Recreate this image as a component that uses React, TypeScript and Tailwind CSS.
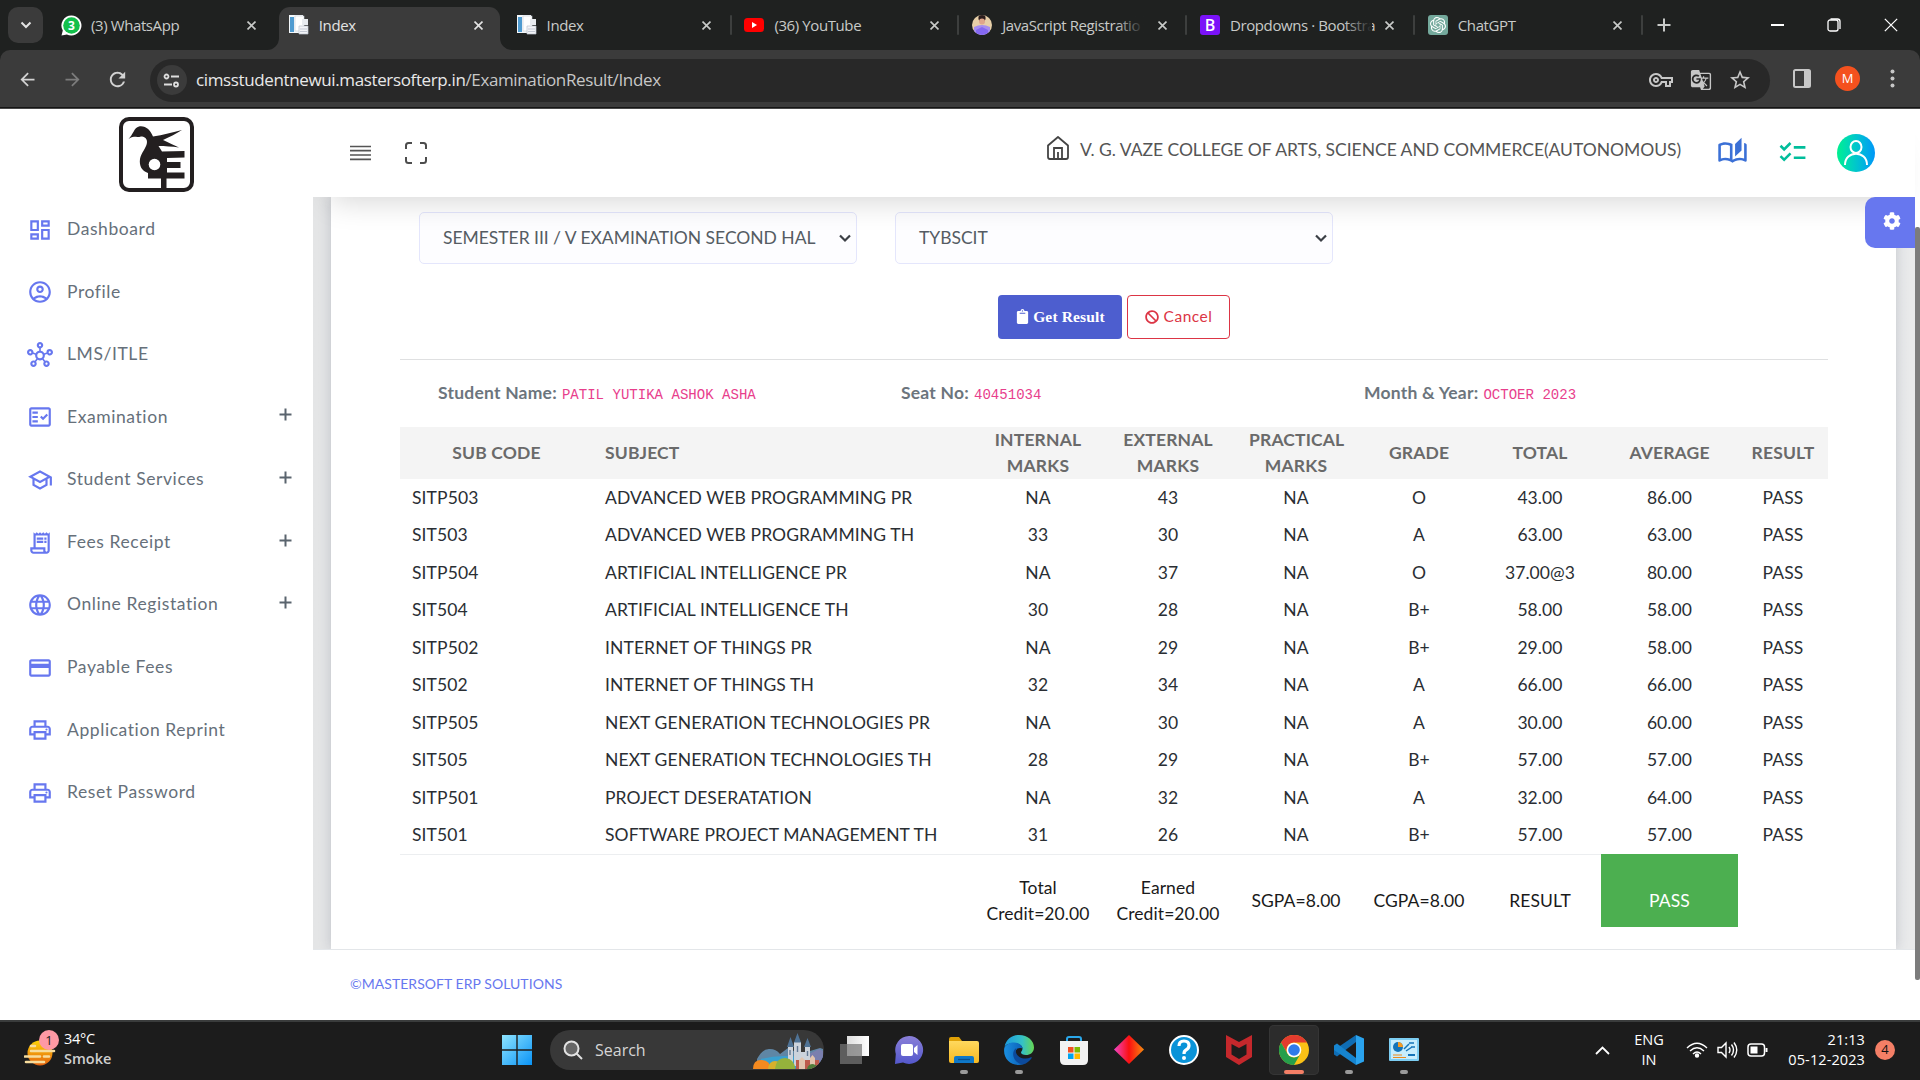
import React from "react";
import {
  MdOutlineDashboard, MdOutlineAccountCircle, MdOutlineHub, MdOutlineFactCheck, MdOutlineSchool,
  MdOutlineReceiptLong, MdLanguage, MdOutlineCreditCard, MdOutlinePrint, MdChecklist, MdOutlineAutoStories,
  MdOutlineVpnKey, MdStarBorder, MdGTranslate, MdRefresh, MdArrowBack, MdArrowForward,
} from "react-icons/md";
import { FaClipboard, FaBan, FaCog } from "react-icons/fa";
import { SiOpenai } from "react-icons/si";

const Cross = ({ s = 9, w = 1.8 }: { s?: number; w?: number }) => (
  <svg width={s} height={s} viewBox="0 0 10 10" stroke="currentColor" strokeWidth={w} fill="none"><path d="M.6.6l8.8 8.8M9.4.6L.6 9.4" /></svg>
);

const DocIcon = () => (
  <svg width="20" height="20" viewBox="0 0 20 20">
    <rect x="0" y="0" width="14" height="18" fill="#f4f8fb" />
    <rect x="1" y="2" width="4" height="15" fill="#4f9bd0" />
    <rect x="6" y="1" width="9" height="15" fill="#fff" stroke="#c5cbd3" strokeWidth=".6" />
    <path d="M13 4h6v6h-6z" fill="#e8ebef" />
    <path d="M10 11h9v8h-9z" fill="#f3f4f7" stroke="#bcc3cf" strokeWidth=".7" />
    <path d="M11 14h7M11 16.500h7" stroke="#c4c9d4" />
  </svg>
);
const WaIcon = () => (
  <svg width="21" height="21" viewBox="0 0 21 21">
    <path d="M10.500.5a10 10 0 1 1-4.600 18.900L.5 20.500l1.300-5A10 10 0 0 1 10.500.5z" fill="#fff" />
    <circle cx="10.500" cy="10.500" r="8.300" fill="#12c04b" />
    <text x="10.500" y="14.800" textAnchor="middle" fontSize="12" fontWeight="700" fill="#fff" fontFamily="Open Sans">3</text>
  </svg>
);
const YtIcon = () => (
  <svg width="20" height="20" viewBox="0 0 20 20"><rect y="3" width="20" height="14" rx="3.500" fill="#f00" /><path d="M8 7l5 3-5 3z" fill="#fff" /></svg>
);
const PersonIcon = () => (
  <svg width="20" height="20" viewBox="0 0 20 20">
    <defs><clipPath id="pc"><circle cx="10" cy="10" r="10" /></clipPath></defs>
    <g clipPath="url(#pc)">
      <rect width="20" height="20" fill="#e7cfa8" />
      <circle cx="10" cy="3" r="3.600" fill="#2a1c1c" /><circle cx="10" cy="6.500" r="3" fill="#dfa58b" />
      <path d="M2 12Q10 8 18 12V20H2z" fill="#a58df0" /><path d="M4 15l6-3 6 3v5H4z" fill="#8468f2" />
    </g>
  </svg>
);
const BIcon = () => (
  <div className="flex h-5 w-5 items-center justify-center rounded-[3px] bg-[#7a12f8] text-[16px] leading-none font-semibold text-white">B</div>
);
const GptIcon = () => (
  <div className="flex h-5 w-5 items-center justify-center rounded-[3px] bg-[#74a99c] text-white"><SiOpenai size={16} /></div>
);

const tabs = [
  { t: "(3) WhatsApp", i: <WaIcon /> },
  { t: "Index", i: <DocIcon />, active: true },
  { t: "Index", i: <DocIcon />, sep: true },
  { t: "(36) YouTube", i: <YtIcon />, sep: true },
  { t: "JavaScript Registratio", i: <PersonIcon />, sep: true, fade: true },
  { t: "Dropdowns · Bootstra", i: <BIcon />, sep: true, fade: true },
  { t: "ChatGPT", i: <GptIcon />, sep: true },
];

const TabStrip = () => (
  <div className="flex h-[50px] items-start bg-[#1f2120] pl-2 font-['Open_Sans',sans-serif] text-[#c8cac8]">
    <div className="mt-[7px] mr-[8px] flex h-9 w-[35px] items-center justify-center rounded-[10px] bg-[#3b3b3b] text-[#e3e3e3]">
      <svg width="12" height="8" viewBox="0 0 12 8" fill="none" stroke="currentColor" strokeWidth="2"><path d="M1.500 1.500L6 6l4.500-4.500" /></svg>
    </div>
    {tabs.map((t, k) => (
      <div key={k} className={`relative flex h-[50px] w-[227.8px] shrink-0 ${t.active ? "text-[#e3e3e3]" : ""}`}>
        <div className={`mt-[7px] flex h-[43px] w-[221px] items-center pb-[7px] pl-[10px] ${t.active ? "rounded-t-[11px] bg-[#3b3b3b]" : ""}`}>
          <span className="flex w-[30px] shrink-0 items-center">{t.i}</span>
          <span className="relative w-[142px] text-[15px] leading-5 tracking-[-0.4px] whitespace-nowrap">
            {t.t}
            {t.fade && <span className="absolute inset-y-0 right-0 w-7 bg-gradient-to-r from-transparent to-[#1f2120]" />}
          </span>
          <span className="ml-[12px] flex w-3 justify-center"><Cross /></span>
        </div>
        {t.sep && <div className="mt-[15px] ml-[2px] h-5 w-[2px] rounded bg-[#3d3f3e]" />}
        {t.active && (
          <>
            <svg className="absolute bottom-0 -left-3" width="12" height="12"><path d="M12 0v12H0A12 12 0 0 0 12 0" fill="#3b3b3b" /></svg>
            <svg className="absolute bottom-0 left-[221px]" width="12" height="12"><path d="M0 0v12h12A12 12 0 0 1 0 0" fill="#3b3b3b" /></svg>
          </>
        )}
      </div>
    ))}
    <div className="ml-[11px] flex h-[50px] items-center">
      <svg width="14" height="14" viewBox="0 0 14 14" stroke="#c8cac8" strokeWidth="2"><path d="M7 .5v13M.5 7h13" /></svg>
    </div>
    <div className="ml-auto flex h-[50px] items-center pr-[22px] text-white">
      <div className="h-[1.5px] w-[13px] bg-white" />
      <svg className="ml-[43px]" width="14" height="14" viewBox="0 0 14 14" fill="none" stroke="#fff" strokeWidth="1.300"><rect x="1" y="2" width="10" height="11" rx="2" /><path d="M3.500 1H10.500a2.600 2.600 0 0 1 2.500 2.600V11" /></svg>
      <span className="ml-[43px]"><Cross s={14} w={0.9} /></span>
    </div>
  </div>
);

const Toolbar = () => (
  <div className="flex h-[59px] bg-[#1f2120]">
    <div className="flex h-[57px] w-full items-center rounded-t-[10px] bg-[#3b3b3b] font-['Open_Sans',sans-serif] shadow-[0_1px_0_#151515,0_2px_0_#474747]">
      <div className="flex w-[150px] items-center pt-px">
        <MdArrowBack size={21} className="ml-[17px] text-[#d2d2d2]" />
        <MdArrowForward size={21} className="ml-[24px] text-[#7c7c7c]" />
        <MdRefresh size={23} className="ml-[23px] text-[#d2d2d2]" />
      </div>
      <div className="mt-[3px] flex h-[43px] w-[1620px] items-center rounded-full bg-[#282828] text-[#c7c7c7]">
        <div className="ml-[7px] flex h-[30px] w-[30px] items-center justify-center rounded-full bg-[#3b3b3b]">
          <svg className="mr-px" width="17" height="15" viewBox="0 0 17 15" fill="none" stroke="#dedede" strokeWidth="1.800"><circle cx="3.500" cy="3.500" r="2" /><path d="M8 3.500h8M1 11.500h8" /><circle cx="13" cy="11.500" r="2" /></svg>
        </div>
        <div className="ml-[9px] text-[17px] tracking-[-0.37px] whitespace-nowrap"><span className="text-[#e8e8e8]">cimsstudentnewui.mastersofterp.in</span>/ExaminationResult/Index</div>
        <div className="ml-auto flex items-center pr-[18px]">
          <MdOutlineVpnKey size={24} /><MdGTranslate size={22} className="ml-[17px]" /><MdStarBorder size={24} className="ml-[16px]" />
        </div>
      </div>
      <svg className="ml-[23px]" width="18" height="19" viewBox="0 0 18 19"><rect x="1" y="1" width="16" height="17" rx="1.500" fill="none" stroke="#c7c7c7" strokeWidth="2" /><rect x="11" y="1" width="6" height="17" fill="#c7c7c7" /></svg>
      <div className="ml-[24px] flex h-[25px] w-[25px] items-center justify-center rounded-full bg-[#f4511e] text-[13px] text-white">M</div>
      <svg className="ml-[30px]" width="5" height="19" viewBox="0 0 5 19" fill="#c7c7c7"><circle cx="2.500" cy="2.500" r="2" /><circle cx="2.500" cy="9.500" r="2" /><circle cx="2.500" cy="16.500" r="2" /></svg>
    </div>
  </div>
);

const nav = [
  { t: "Dashboard", I: MdOutlineDashboard },
  { t: "Profile", I: MdOutlineAccountCircle },
  { t: "LMS/ITLE", I: MdOutlineHub },
  { t: "Examination", I: MdOutlineFactCheck, p: true },
  { t: "Student Services", I: MdOutlineSchool, p: true },
  { t: "Fees Receipt", I: MdOutlineReceiptLong, p: true },
  { t: "Online Registation", I: MdLanguage, p: true },
  { t: "Payable Fees", I: MdOutlineCreditCard },
  { t: "Application Reprint", I: MdOutlinePrint },
  { t: "Reset Password", I: MdOutlinePrint },
];

const CollegeLogo = () => (
  <svg width="75" height="75" viewBox="0 0 75 75">
    <rect x="2" y="2" width="71" height="71" rx="8" fill="#fff" stroke="#231f20" strokeWidth="4" />
    <path d="M9.500 22C14 18 15 10.500 20 9.500C27 8.500 31 13 34 19.500C44 18 54 15 63 13C57 17 50 20 44 23C50 26 55 28 60 30.500C53 29.500 46 29 39.500 29L43 34.500L65.500 34V40.500L48 41V45H61.500V51H48V55.500H65.500V61.500H47.500V72H42V61.500H29V56C23 54 20 49 21 42C22 36 28 30 28 25C28 21 25 19.500 22 19.500C19 20.500 17 19.800 15 19.800C13 20 11 21 9.500 22Z" fill="#231f20" />
    <circle cx="35.500" cy="47.500" r="5.800" fill="#fff" />
  </svg>
);

const Sidebar = () => (
  <aside className="relative z-20 flex w-[313px] shrink-0 flex-col bg-white">
    <div className="mt-[8px] ml-[119px] h-[80px]"><CollegeLogo /></div>
    <nav className="mt-px flex flex-col">
      {nav.map(({ t, I, p }) => (
        <div key={t} className="flex h-[62.55px] items-center pl-[27px]">
          <I className="mt-[1px] shrink-0 text-[#6777ef]" size={26} />
          <span className="ml-[14px] text-[17.5px] tracking-[0.58px] text-[#66707a]">{t}</span>
          {p && <svg className="mt-[-4px] mr-[21px] ml-auto" width="13" height="13" viewBox="0 0 13 13" stroke="#5a646e" strokeWidth="2"><path d="M6.500.5v12M.5 6.500h12" /></svg>}
        </div>
      ))}
    </nav>
  </aside>
);

const Header = () => (
  <header className="relative z-10 flex h-[88px] shrink-0 bg-white shadow-[0_22px_30px_-18px_rgba(0,0,0,0.17)]">
    <svg className="mt-[36px] ml-[37px]" width="21" height="16" viewBox="0 0 21 16" stroke="#555" strokeWidth="1.700"><path d="M0 1.500h21M0 5.700h21M0 10h21M0 14.300h21" /></svg>
    <svg className="mt-[33px] ml-[34px]" width="22" height="22" viewBox="0 0 22 22" fill="none" stroke="#4d4d4d" strokeWidth="2"><path d="M1 7V3.500Q1 1 3.500 1H7M15 1h3.500Q21 1 21 3.500V7M21 15v3.500Q21 21 18.500 21H15M7 21H3.500Q1 21 1 18.500V15" /></svg>
    <svg className="mt-[27px] ml-[620px]" width="22" height="24" viewBox="0 0 22 24" fill="none" stroke="#444" strokeWidth="1.800"><path d="M1 9.500L11 1l10 8.500V21q0 2-2 2H3q-2 0-2-2z" strokeLinejoin="round" /><path d="M7 23V12h8v11M11 16v7" /></svg>
    <div className="mt-[28px] ml-[11px] w-[608px] text-[17.5px] leading-[26px] tracking-[-0.03px] whitespace-nowrap text-[#555]">V. G. VAZE COLLEGE OF ARTS, SCIENCE AND COMMERCE(AUTONOMOUS)</div>
    <MdOutlineAutoStories className="mt-[28px] ml-[29px] text-[#3b70d6]" size={31} />
    <MdChecklist className="mt-[28px] ml-[29px] text-[#00bd9b]" size={31} />
    <div className="mt-[25px] ml-[29px] flex h-[38px] w-[38px] items-center justify-center rounded-full bg-gradient-to-r from-[#00f08e] to-[#0096f8]">
      <svg width="26" height="26" viewBox="0 0 26 26" fill="none" stroke="#fff" strokeWidth="2"><ellipse cx="13" cy="7" rx="5.500" ry="6" /><path d="M2 25C2 10 24 10 24 25" /></svg>
    </div>
  </header>
);

const Select = ({ t }: { t: string }) => (
  <div className="flex h-[52px] w-[438px] items-center rounded-[5px] border border-[#e4e6fc] bg-[#fdfdff] pl-[23px] text-[17.5px] text-[#555c63]">
    <span className="w-[374px] tracking-[-0.03px] whitespace-nowrap">{t}</span>
    <svg className="ml-[22px]" width="12" height="9" viewBox="0 0 12 9" fill="none" stroke="#3c4046" strokeWidth="2.200"><path d="M1 1.500l5 5 5-5" /></svg>
  </div>
);

const rows = [
  ["SITP503", "ADVANCED WEB PROGRAMMING PR", "NA", "43", "NA", "O", "43.00", "86.00", "PASS"],
  ["SIT503", "ADVANCED WEB PROGRAMMING TH", "33", "30", "NA", "A", "63.00", "63.00", "PASS"],
  ["SITP504", "ARTIFICIAL INTELLIGENCE PR", "NA", "37", "NA", "O", "37.00@3", "80.00", "PASS"],
  ["SIT504", "ARTIFICIAL INTELLIGENCE TH", "30", "28", "NA", "B+", "58.00", "58.00", "PASS"],
  ["SITP502", "INTERNET OF THINGS PR", "NA", "29", "NA", "B+", "29.00", "58.00", "PASS"],
  ["SIT502", "INTERNET OF THINGS TH", "32", "34", "NA", "A", "66.00", "66.00", "PASS"],
  ["SITP505", "NEXT GENERATION TECHNOLOGIES PR", "NA", "30", "NA", "A", "30.00", "60.00", "PASS"],
  ["SIT505", "NEXT GENERATION TECHNOLOGIES TH", "28", "29", "NA", "B+", "57.00", "57.00", "PASS"],
  ["SITP501", "PROJECT DESERATATION", "NA", "32", "NA", "A", "32.00", "64.00", "PASS"],
  ["SIT501", "SOFTWARE PROJECT MANAGEMENT TH", "31", "26", "NA", "B+", "57.00", "57.00", "PASS"],
];
const heads = ["SUB CODE", "SUBJECT", "INTERNAL MARKS", "EXTERNAL MARKS", "PRACTICAL MARKS", "GRADE", "TOTAL", "AVERAGE", "RESULT"];
const cols = "grid grid-cols-[193px_380px_130px_130px_126px_120px_122px_137px_90px]";

const Info = ({ l, v, c }: { l: string; v: string; c: string }) => (
  <div className={`flex items-baseline ${c}`}>
    <span className="text-[17.5px] font-bold tracking-[0.22px] text-[#6c757d]">{l}</span>
    <span className="ml-[5px] font-['Liberation_Mono',monospace] text-[14.05px] text-[#e83e8c]">{v}</span>
  </div>
);

const Results = () => (
  <div className="w-[1428px] text-[17.5px]">
    <div className={`${cols} h-[52px] items-center bg-[#f4f4f4] text-center text-[17.5px] leading-[26px] font-bold tracking-[0.15px] text-[#6a6a6a]`}>
      {heads.map((h, k) => <div key={h} className={k === 1 ? "pl-3 text-left" : k > 1 && k < 5 ? "px-4" : ""}>{h}</div>)}
    </div>
    {rows.map((r) => (
      <div key={r[0]} className={`${cols} h-[37.5px] items-center text-center tracking-[0.1px] text-[#2a2e33]`}>
        {r.map((c, k) => <div key={k} className={k < 2 ? "pl-3 text-left" : ""}>{c}</div>)}
      </div>
    ))}
    <div className={`${cols} h-[73px] text-center leading-[26px] text-[#1a1a1a]`}>
      {["", "", "Total Credit=20.00", "Earned Credit=20.00", "SGPA=8.00", "CGPA=8.00", "RESULT", "PASS"].map((c, k) => (
        <div key={k} className={`flex items-center justify-center border-t pt-5 ${k === 7 ? "border-[#4caf50] bg-[#4caf50] text-white" : "border-[#eceef0]"}`}><span className="w-[118px] tracking-[0.08px]">{c}</span></div>
      ))}
    </div>
  </div>
);

const Main = () => (
  <div className="flex w-[1602px] flex-col">
    <Header />
    <div className="relative flex h-[752px] bg-gradient-to-r from-[#e4e5e6] to-[#e9eaeb]">
      <div className="ml-[18px] h-[752px] w-[1565px] bg-white pl-[69px] shadow-[0_0_12px_rgba(40,50,80,0.2)]">
        <div className="flex gap-[38px] pt-[15px] pl-[19px]">
          <Select t="SEMESTER III / V EXAMINATION SECOND HAL" />
          <Select t="TYBSCIT" />
        </div>
        <div className="mt-[31px] flex gap-[5px] pl-[598px]">
          <div className="flex h-[44px] w-[124px] items-center justify-center gap-[3px] rounded-[4px] bg-[#4d5ecf] pb-px font-['Liberation_Serif',serif] text-[15.5px] font-bold tracking-[0.15px] text-white"><FaClipboard size={15} />Get Result</div>
          <div className="flex h-[44px] w-[103px] items-center justify-center gap-[5px] rounded-[4px] border border-[#dc3545] pb-px text-[15.5px] tracking-[0.5px] text-[#dc3545]"><FaBan size={14} />Cancel</div>
        </div>
        <div className="mt-[20px] h-px w-[1428px] bg-[#dfe0e1]" />
        <div className="mt-[20px] flex h-[26px] pl-[38px]">
          <Info l="Student Name:" v="PATIL YUTIKA ASHOK ASHA" c="w-[463px]" />
          <Info l="Seat No:" v="40451034" c="w-[463px]" />
          <Info l="Month & Year:" v="OCTOER 2023" c="" />
        </div>
        <div className="mt-[21px]"><Results /></div>
      </div>
      <div className="absolute top-0 right-0 z-20 flex h-[51px] w-[50px] items-center justify-center rounded-l-[10px] bg-[#6777ef] pb-1 pl-1 text-white"><FaCog size={18} /></div>
    </div>
    <footer className="relative z-10 flex h-[71px] items-center border-t border-[#e3e6e9] bg-white pb-[3px] pl-[37px] text-[14px] tracking-[0.05px] text-[#6777ef]">©MASTERSOFT ERP SOLUTIONS</footer>
  </div>
);

const Castle = () => (
  <svg className="-mb-px" width="70" height="36" viewBox="0 0 70 36">
    <path d="M4 26Q10 15 17 16q6 0 10 5l8-6 12 6 20-6 3 1v20H4z" fill="#5f86a5" />
    <path d="M8 26q22-6 50 0v9H8z" fill="#3aa0d0" />
    <path d="M54 22l12-6 4 2v14H54z" fill="#7a7fae" />
    <g fill="#ccd3dc"><path d="M35 13h5v20h-5zM41 9h7v24h-7zM52 14h5v16h-5zM48 19h4v14h-4z" /></g>
    <g fill="#4f7396"><path d="M34 14l3.500-10L41 14zM41 9.500L44.500 0 48 9.500zM51 14l3.500-9L58 14z" /></g>
    <path d="M37 17v5M44.500 13v6M54.500 18v5" stroke="#647a94" strokeWidth="1.400" />
    <path d="M43 27h23v6q-4 3-10 3H43z" fill="#bd5a4b" />
    <path d="M46 36V27l3-3 3 3v9zM57 33v-8l2.500-3 2.500 3v8z" fill="#e2c4ae" />
    <path d="M0 36q0-9 8-9 9 0 10 9z" fill="#f58a1f" />
    <path d="M15 36q1-8 7-8t8 8z" fill="#d8b02c" />
    <path d="M22 36q1-11 10-11 10 1 10 11z" fill="#95b23c" />
    <path d="M54 36q1-5 6-5 4 1 5 3l-5 2z" fill="#4f7c3a" />
  </svg>
);

const apps: { n: string; d?: boolean; on?: boolean; e: React.ReactNode }[] = [
  { n: "tasks", e: <><path d="M8 1h22v20H8z" fill="url(#tw)" /><path d="M1 9h22v20H1z" fill="#777" fillOpacity=".72" /></> },
  { n: "chat", e: <><path d="M15 1a14 14 0 1 1-6 26.600L1 29l.8-10A14 14 0 0 1 15 1z" fill="url(#ch)" /><rect x="7" y="9" width="12" height="12" rx="2" fill="#fff" /><path d="M20 13l3.500-3v10L20 17z" fill="#fff" /></> },
  { n: "files", d: true, e: <><path d="M0 4q0-2 2-2h8l3 4H0z" fill="#e0a106" /><path d="M0 6h28q2 0 2 2v18q0 2-2 2H2q-2 0-2-2z" fill="url(#fo)" /><path d="M5 28v-5q0-2 2-2h16q2 0 2 2v5z" fill="#0f78c8" /><path d="M9 24.500h12" stroke="#0a4f8e" strokeWidth="1.300" /></> },
  { n: "edge", d: true, e: <><path d="M.5 12C2 4 8 0 15 0c9 0 15 6 15 12.500 0 5-4 7.500-8 7.500-3 0-5-1.300-5-2.500 0-1 1.500-1.500 1.500-4C18.500 10 14 8 10 8 5 8 1.500 10 .5 12z" fill="url(#ed)" /><path d="M.3 13C1.500 9.500 6 7.500 10 7.500c5 0 8.500 3 8.500 6-7-2-9 4-5.500 9.500 2 3.500 6 6.500 6 6.500C8 32-1.500 24 .3 13z" fill="url(#eb)" /><path d="M12.500 13c-4 2-4.500 8-1 12.500 3 3.500 7 4 7.500 4 4-1 7-4 8.700-6.500.3-.7-.2-1-.8-.7-6 3-14 .2-15-5.300-.2-1.500 0-3 .6-4z" fill="#0c4a9b" /></> },
  { n: "store", e: <><path d="M8 7V4q0-2 2-2h10q2 0 2 2v3" fill="none" stroke="#2aa7ea" strokeWidth="2" /><path d="M1 6h28v19q0 5-5 5H6q-5 0-5-5z" fill="#f2f2f2" /><path d="M9 12h5.500v5.500H9z" fill="#f25022" /><path d="M15.500 12H21v5.500h-5.500z" fill="#7fba00" /><path d="M9 18.500h5.500V24H9z" fill="#00a4ef" /><path d="M15.500 18.500H21V24h-5.500z" fill="#ffb900" /></> },
  { n: "diamond", e: <path d="M15 0l15 14.500L15 29 0 14.500z" fill="url(#di)" /> },
  { n: "help", e: <><circle cx="15" cy="15" r="14" fill="#0a93d8" stroke="#fff" strokeWidth="2" /><path d="M10 11q0-5 5-5t5 4.500q0 3-3 4.500-2 1-2 4" fill="none" stroke="#fff" strokeWidth="3.200" /><circle cx="15" cy="23" r="2" fill="#fff" /></> },
  { n: "shield", e: <path d="M2 0l13 7L28 0v22l-13 8L2 22zM7.500 9v10.500L15 24l7.500-4.500V9L15 13z" fill="#c5282c" fillRule="evenodd" /> },
  { n: "chrome", on: true, e: <><circle cx="15" cy="15" r="15" fill="#fbc116" /><path d="M2 7.500A15 15 0 0 1 28 7.500H15a7.500 7.500 0 0 0-6.500 11.250z" fill="#e33b2e" /><path d="M2 7.500A15 15 0 0 0 15 30l6.500-11.250A7.500 7.500 0 0 1 8.500 18.750z" fill="#269f4b" /><circle cx="15" cy="15" r="7.300" fill="#fff" /><circle cx="15" cy="15" r="5.800" fill="#2f7bea" /></> },
  { n: "code", d: true, e: <><path d="M22 0v7L3 21.500l-3-2V15z" fill="#0f6db4" /><path d="M22 30v-7L3 8.500l-3 2V15z" fill="#1684cf" /><path d="M22 0l8 3.500v23L22 30z" fill="#2aa3ee" /></> },
  { n: "panel", d: true, e: <><rect x="0" y="3" width="30" height="23" rx="1" fill="#7ccdf2" /><rect x="2" y="5" width="26" height="19" fill="#c7edfc" /><circle cx="9" cy="12" r="5" fill="#1474b8" /><path d="M9 12V7a5 5 0 0 1 5 5z" fill="#f59a23" /><path d="M15 14l5-5M17 16l6-4M20 8h5M22 12h4" stroke="#1474b8" strokeWidth="1.500" /><path d="M4 20h9M4 22.500h13" stroke="#ec8a1c" /><path d="M19 20h7" stroke="#1474b8" strokeWidth="2" /></> },
];

const Taskbar = () => (
  <div className="flex h-[60px] items-center border-t-2 border-[#3a3c3c] bg-[#1c1c1c] pb-[2px] font-['Open_Sans',sans-serif] text-[15px] text-white">
    <svg width="0" height="0" className="absolute">
      <defs>
        <linearGradient id="tw"><stop stopColor="#ddd" /><stop offset="1" stopColor="#fff" /></linearGradient>
        <linearGradient id="ch" x2="0" y2="1"><stop stopColor="#8a7fd8" /><stop offset="1" stopColor="#5458cc" /></linearGradient>
        <linearGradient id="fo" x2="0" y2="1"><stop stopColor="#ffd95e" /><stop offset="1" stopColor="#f7b922" /></linearGradient>
        <linearGradient id="ed"><stop stopColor="#1c9be0" /><stop offset=".6" stopColor="#35c1c7" /><stop offset="1" stopColor="#66d752" /></linearGradient>
        <linearGradient id="eb"><stop stopColor="#1a8fe0" /><stop offset="1" stopColor="#0b5fb8" /></linearGradient>
        <linearGradient id="di"><stop stopColor="#f046c8" /><stop offset=".5" stopColor="#fb1010" /><stop offset="1" stopColor="#f58a10" /></linearGradient>
        <linearGradient id="wn" x2="1" y2="1"><stop stopColor="#8ee4ff" /><stop offset="1" stopColor="#0a93f5" /></linearGradient>
        <linearGradient id="su" x2="0" y2="1"><stop stopColor="#fdd308" /><stop offset="1" stopColor="#e3600e" /></linearGradient>
      </defs>
    </svg>
    <svg className="ml-[24px]" width="36" height="44" viewBox="0 0 36 44">
      <circle cx="16" cy="25" r="12.500" fill="url(#su)" /><path d="M7 18h4M7 23h23M1 28.500h15M20 28.500h5M2 34h18" stroke="#f7dc9c" strokeWidth="2.600" strokeLinecap="round" />
      <circle cx="25" cy="12" r="10" fill="#ff99a4" /><text x="25" y="17" textAnchor="middle" fontSize="13" fill="#222" fontFamily="Open Sans">1</text>
    </svg>
    <div className="mt-[-2px] ml-[4px] w-[438px] leading-5"><div className="text-[14.5px] tracking-[-0.3px]">34°C</div><div className="text-[14.5px] font-semibold tracking-[0px] text-[#cfcfcf]">Smoke</div></div>
    <svg width="30" height="30" viewBox="0 0 30 30" fill="url(#wn)"><path d="M0 0h14.300v14.300H0zM15.700 0H30v14.300H15.700zM0 15.700h14.300V30H0zM15.700 15.700H30V30H15.700z" /></svg>
    <div className="ml-[18px] flex h-[40px] w-[274px] items-center overflow-hidden rounded-full bg-[#383838]">
      <svg className="ml-[13px]" width="20" height="20" viewBox="0 0 20 20" fill="#666" stroke="#e2e2e2" strokeWidth="2"><circle cx="8.500" cy="8.500" r="7" /><path d="M13.500 13.500L19 19" /></svg>
      <span className="ml-[12px] w-[158px] text-[16px] text-[#d5d5d5]">Search</span>
      <Castle />
    </div>
    <div className="ml-[2px] flex">
      {apps.map((a) => (
        <div key={a.n} className={`mx-[2.5px] flex h-[50px] w-[50px] flex-col items-center rounded-[5px] pt-[10px] ${a.on ? "bg-[#2c2c2c] ring-1 ring-[#353535] ring-inset" : ""}`}>
          <svg width="30" height="30" viewBox="0 0 30 30">{a.e}</svg>
          {a.d && <div className="mt-[5px] h-1 w-2 rounded-full bg-[#9a9a9a]" />}
          {a.on && <div className="mt-[5px] h-1 w-5 rounded-full bg-[#f47f66]" />}
        </div>
      ))}
    </div>
    <div className="ml-auto flex items-center pr-[25px]">
      <svg width="15" height="9" viewBox="0 0 15 9" fill="none" stroke="#fff" strokeWidth="1.800"><path d="M1 8l6.500-6.500L14 8" /></svg>
      <div className="ml-[22px] w-[34px] text-center text-[14.5px] leading-5">ENG<br />IN</div>
      <svg className="ml-[20px]" width="22" height="16" viewBox="0 0 22 16" fill="none" stroke="#fff" strokeWidth="1.400"><path d="M1 6Q11-3.500 21 6M4 9q7-6.500 14 0M7 12q4-4 8 0" /><circle cx="11" cy="13.500" r="1.500" fill="#fff" /></svg>
      <svg className="ml-[9px]" width="21" height="18" viewBox="0 0 21 18" fill="none" stroke="#fff" strokeWidth="1.400"><path d="M1 6.500h3.500L9 2v14l-4.500-4.500H1zM12 6q2 3 0 6M14.500 3.500q4 5.500 0 11M17 1.500q5.500 7.500 0 15" /></svg>
      <svg className="ml-[9px]" width="21" height="14" viewBox="0 0 21 14" fill="none" stroke="#fff" strokeWidth="1.500"><rect x="1" y="1" width="16.500" height="12" rx="3" /><rect x="3.500" y="3.500" width="7" height="7" fill="#fff" stroke="none" /><path d="M19.500 5v4" strokeWidth="2" /></svg>
      <div className="ml-[11px] w-[86px] text-right text-[14.5px] leading-5 tracking-[0.1px] whitespace-nowrap">21:13<br />05-12-2023</div>
      <div className="ml-[10px] flex h-5 w-5 items-center justify-center rounded-full bg-[#f47f66] text-[13px] text-[#111]">4</div>
    </div>
  </div>
);

export default function App() {
  return (
    <div className="flex h-[1080px] w-[1920px] flex-col overflow-hidden bg-white font-['Lato',sans-serif]">
      <TabStrip />
      <Toolbar />
      <div className="flex h-[911px] overflow-hidden">
        <Sidebar />
        <Main />
        <div className="w-[5px] bg-white pt-[118px] shadow-[-2px_0_8px_rgba(0,0,0,0.15)]"><div className="h-[753px] rounded-[2px] bg-[#7c7c7c]" /></div>
      </div>
      <Taskbar />
    </div>
  );
}
